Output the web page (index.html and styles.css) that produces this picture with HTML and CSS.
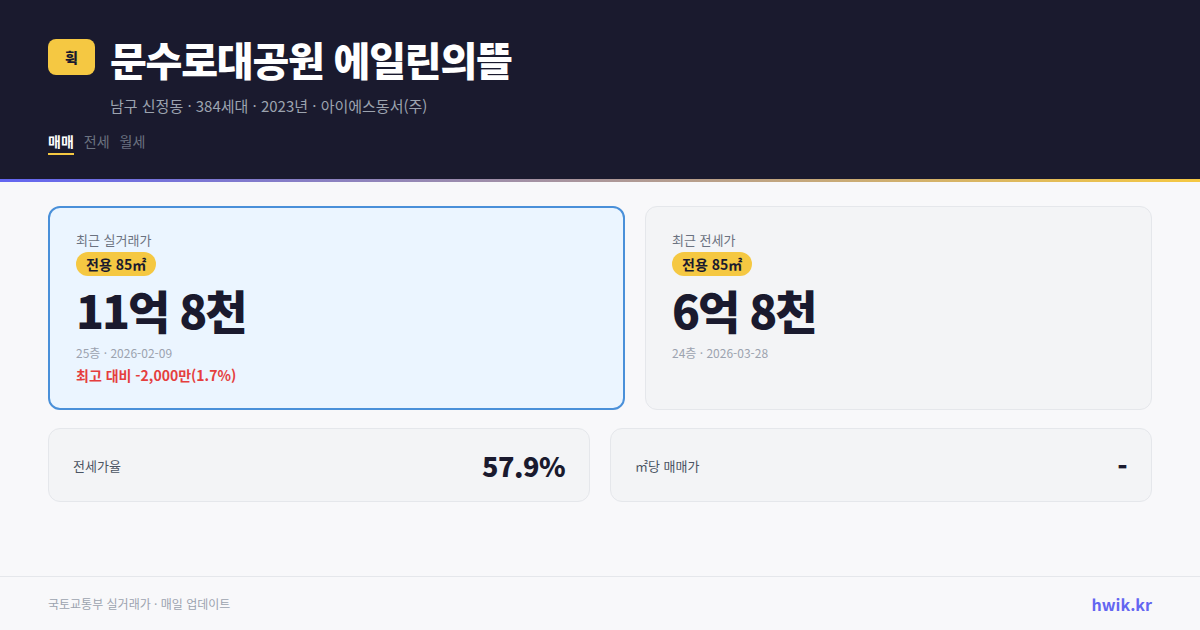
FILE: index.html
```html
<!DOCTYPE html>
<html lang="ko">
<head>
<meta charset="utf-8">
<link rel="stylesheet" href="styles.css">
</head>
<body>
<div class="page">
  <header class="header">
    <div class="title-row">
      <div class="logo">휙</div>
      <h1 class="title">문수로대공원 에일린의뜰</h1>
    </div>
    <div class="subtitle">남구 신정동 · 384세대 · 2023년 · 아이에스동서(주)</div>
    <nav class="tabs">
      <span class="tab active">매매</span>
      <span class="tab">전세</span>
      <span class="tab">월세</span>
    </nav>
  </header>
  <div class="accent"></div>
  <main class="main">
    <div class="cards">
      <div class="card card-primary">
        <div class="card-label">최근 실거래가</div>
        <span class="badge">전용 85㎡</span>
        <div class="price">11억 8천</div>
        <div class="meta">25층 · 2026-02-09</div>
        <div class="diff">최고 대비 -2,000만(1.7%)</div>
      </div>
      <div class="card card-secondary">
        <div class="card-label">최근 전세가</div>
        <span class="badge">전용 85㎡</span>
        <div class="price">6억 8천</div>
        <div class="meta">24층 · 2026-03-28</div>
      </div>
    </div>
    <div class="stats">
      <div class="stat">
        <span class="stat-label">전세가율</span>
        <span class="stat-value">57.9%</span>
      </div>
      <div class="stat">
        <span class="stat-label">㎡당 매매가</span>
        <span class="stat-value">-</span>
      </div>
    </div>
  </main>
  <footer class="footer">
    <span class="source">국토교통부 실거래가 · 매일 업데이트</span>
    <span class="brand">hwik.kr</span>
  </footer>
</div>
</body>
</html>
```
FILE: styles.css
```css
* { box-sizing: border-box; margin: 0; padding: 0; }
html, body { width: 1200px; height: 630px; overflow: hidden; }
body {
  font-family: "Noto Sans CJK KR", "Noto Sans", sans-serif;
  background: #f8f8fa;
  color: #1a1a2e;
}
.page { display: flex; flex-direction: column; height: 630px; }
.header {
  background: #1a1a2e;
  height: 179px;
  padding: 36px 48px 0;
}
.title-row { display: flex; align-items: flex-start; gap: 15px; }
.logo {
  width: 47px; height: 36px;
  margin-top: 3px;
  background: #f5c842;
  border-radius: 8px;
  display: flex; align-items: center; justify-content: center;
  font-size: 14px; font-weight: 900; color: #1a1a2e;
}
.title {
  font-size: 40px; font-weight: 900; color: #ffffff;
  line-height: 46px; letter-spacing: -1.2px;
}
.subtitle {
  margin: 13px 0 0 62px;
  font-size: 15px; color: #9ca3af; line-height: 22px;
}
.tabs { display: flex; gap: 10px; margin-top: 14px; }
.tab {
  font-size: 14px; color: #6b7280; line-height: 20px;
  padding-bottom: 2px;
}
.tab.active {
  color: #ffffff; font-weight: 700;
  border-bottom: 2px solid #f5c842;
}
.accent {
  height: 3px;
  background: linear-gradient(90deg, #6366f1, #f5c842);
}
.main { flex: 1; padding: 24px 48px 0; }
.cards { display: flex; gap: 20px; }
.card {
  height: 204px;
  border-radius: 12px;
  padding: 23px 26px;
  display: flex; flex-direction: column; align-items: flex-start;
}
.card-primary {
  width: 577px;
  background: #ebf5ff;
  border: 2px solid #4a90d9;
}
.card-secondary {
  flex: 1;
  background: #f3f4f6;
  border: 1px solid #e5e7eb;
  padding-top: 24px;
}
.card-label { font-size: 13px; color: #6b7280; line-height: 18px; }
.badge {
  margin-top: 3px;
  background: #f5c842;
  border-radius: 12px;
  padding: 0 10px;
  font-size: 14px; font-weight: 700; line-height: 24px;
  color: #1a1a2e;
}
.price {
  font-size: 46px; font-weight: 900; line-height: 64px;
  letter-spacing: -2px; color: #1a1a2e;
  margin-top: 1px;
}
.meta { font-size: 12px; color: #9ca3af; line-height: 18px; margin-top: 3px; }
.diff { font-size: 14px; font-weight: 700; color: #e53e3e; line-height: 20px; margin-top: 3px; }
.stats { display: flex; gap: 20px; margin-top: 18px; }
.stat {
  flex: 1; height: 74px;
  background: #f3f4f6;
  border: 1px solid #e5e7eb;
  border-radius: 12px;
  padding: 0 24px;
  display: flex; align-items: center; justify-content: space-between;
}
.stat-label { font-size: 13px; color: #4b5563; }
.stat-value { font-size: 27px; font-weight: 900; color: #1a1a2e; letter-spacing: -0.5px; }
.footer {
  height: 54px;
  border-top: 1px solid #e5e7eb;
  padding: 0 48px;
  display: flex; align-items: center; justify-content: space-between;
}
.source { font-size: 12px; color: #9ca3af; }
.brand { font-size: 16px; font-weight: 700; color: #6366f1; }
```
